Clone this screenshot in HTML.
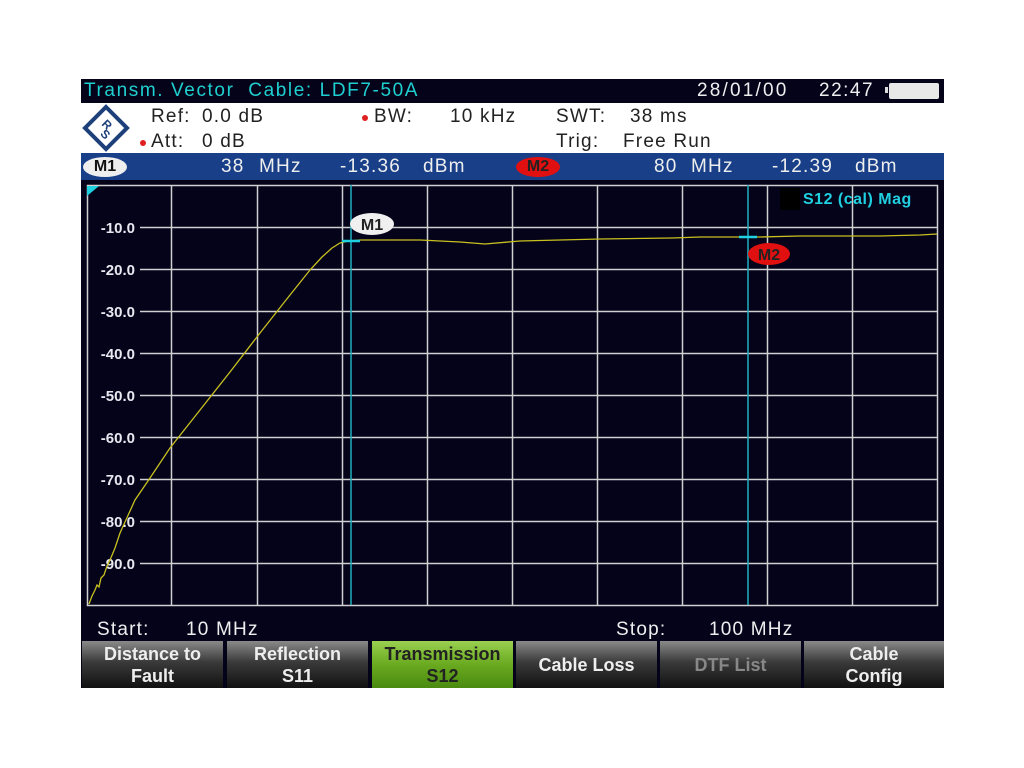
<!DOCTYPE html>
<html><head><style>
body{margin:0;width:1024px;height:768px;background:#fff;position:relative;overflow:hidden;font-family:"Liberation Sans",sans-serif}
.a{position:absolute}
.t{font-size:19px;white-space:nowrap;letter-spacing:1.2px}
.btn{position:absolute;top:641px;height:47px;width:141px;background:linear-gradient(#8a8a8a,#3a3a3a 45%,#111);color:#eee;font-weight:bold;font-size:18px;text-align:center;line-height:22px;display:flex;align-items:center;justify-content:center;font-family:"Liberation Sans Narrow","Liberation Sans",sans-serif}
</style></head><body>
<div class="a" style="left:81px;top:79px;width:863px;height:609px;background:#04031a"></div>
<div class="a t" style="left:84px;top:80px;color:#1fd0d0;letter-spacing:1.6px">Transm. Vector&nbsp; Cable: LDF7-50A</div>
<div class="a t" style="left:697px;top:80px;color:#eee;letter-spacing:2.2px">28/01/00</div>
<div class="a t" style="left:819px;top:80px;color:#eee;letter-spacing:1.5px">22:47</div>
<div class="a" style="left:885px;top:87px;width:3px;height:6px;background:#ddd"></div>
<div class="a" style="left:889px;top:83px;width:50px;height:16px;background:#e8e8e8;border-radius:2px"></div>
<div class="a" style="left:81px;top:103px;width:863px;height:50px;background:#fff"></div>
<svg class="a" style="left:82px;top:104px" width="48" height="48" viewBox="0 0 48 48"><polygon points="24,3 45,24 24,45 3,24" fill="none" stroke="#1d3f7a" stroke-width="4"/><text x="18" y="25" font-size="12" font-weight="bold" fill="#1d3f7a" transform="rotate(45 24 24)">R</text><text x="24" y="33" font-size="12" font-weight="bold" fill="#1d3f7a" transform="rotate(45 24 24)">S</text></svg>
<div class="a t" style="left:151px;top:106px;color:#222">Ref:</div><div class="a t" style="left:202px;top:106px;color:#222">0.0 dB</div>
<div class="a t" style="left:151px;top:131px;color:#222">Att:</div><div class="a t" style="left:202px;top:131px;color:#222">0 dB</div>
<div class="a" style="left:140px;top:140px;width:6px;height:6px;border-radius:3px;background:#e02020"></div>
<div class="a" style="left:362px;top:115px;width:6px;height:6px;border-radius:3px;background:#e02020"></div>
<div class="a t" style="left:374px;top:106px;color:#222">BW:</div><div class="a t" style="left:450px;top:106px;color:#222">10 kHz</div>
<div class="a t" style="left:556px;top:106px;color:#222">SWT:</div><div class="a t" style="left:630px;top:106px;color:#222">38 ms</div>
<div class="a t" style="left:556px;top:131px;color:#222">Trig:</div><div class="a t" style="left:623px;top:131px;color:#222">Free Run</div>
<div class="a" style="left:81px;top:153px;width:863px;height:27px;background:#183f88"></div>
<div class="a" style="left:83px;top:157px;width:44px;height:20px;border-radius:50%;background:#eee;color:#111;font-weight:bold;font-size:16px;text-align:center;line-height:20px">M1</div>
<div class="a t" style="left:221px;top:156px;color:#eee">38</div><div class="a t" style="left:259px;top:156px;color:#eee">MHz</div><div class="a t" style="left:340px;top:156px;color:#eee">-13.36</div><div class="a t" style="left:423px;top:156px;color:#eee">dBm</div>
<div class="a" style="left:516px;top:157px;width:44px;height:20px;border-radius:50%;background:#e01010;color:#222;font-weight:bold;font-size:16px;text-align:center;line-height:20px">M2</div>
<div class="a t" style="left:654px;top:156px;color:#eee">80</div><div class="a t" style="left:691px;top:156px;color:#eee">MHz</div><div class="a t" style="left:772px;top:156px;color:#eee">-12.39</div><div class="a t" style="left:855px;top:156px;color:#eee">dBm</div>
<svg class="a" style="left:0;top:0" width="1024" height="768">
<g stroke="#d0d0d0" stroke-width="1.5" fill="none">
<rect x="87.5" y="185.5" width="850" height="420"/>
<path d="M171.5 185V605M257.5 185V605M342.5 185V605M427.5 185V605M512.5 185V605M597.5 185V605M682.5 185V605M767.5 185V605M852.5 185V605"/>
<path d="M140 227.5H937M140 269.5H937M140 311.5H937M140 353.5H937M140 395.5H937M140 437.5H937M140 479.5H937M140 521.5H937M140 563.5H937"/>
</g>
<polygon points="87,186 99,186 87,196" fill="#1fd0e0"/>
<g font-family="Liberation Sans" font-weight="bold" font-size="15" fill="#e8e8f0" text-anchor="end">
<text x="135" y="233">-10.0</text><text x="135" y="275">-20.0</text><text x="135" y="317">-30.0</text><text x="135" y="359">-40.0</text><text x="135" y="401">-50.0</text><text x="135" y="443">-60.0</text><text x="135" y="485">-70.0</text><text x="135" y="527">-80.0</text><text x="135" y="569">-90.0</text>
</g>
<rect x="780" y="188" width="20" height="22" fill="#000"/>
<text x="803" y="204" font-family="Liberation Sans" font-weight="bold" font-size="16" fill="#1fd0e0" letter-spacing="0.5">S12 (cal) Mag</text>
<line x1="351" y1="185" x2="351" y2="605" stroke="#1fb0c0" stroke-width="1.5"/>
<line x1="748" y1="185" x2="748" y2="605" stroke="#1fb0c0" stroke-width="1.5"/>
<polyline fill="none" stroke="#c8c020" stroke-width="1.3" points="89,604 92,596 95,590 97,585 99,587 101,578 104,575 107,566 110,560 115,548 120,533 125,522 135,500 150,478 170,448 200,410 230,372 260,333 290,295 310,270 322,257 332,248 340,243 348,241 360,240 420,240 460,242 485,244 520,241 560,240 600,239 672,238 700,237 740,237 760,237 800,236 840,236 880,236 920,235 937,234"/>
<line x1="342" y1="241" x2="360" y2="241" stroke="#1fd0e0" stroke-width="2.5"/>
<line x1="739" y1="237" x2="757" y2="237" stroke="#1fd0e0" stroke-width="2.5"/>
<ellipse cx="372" cy="224" rx="22" ry="11" fill="#f0f0f0"/>
<text x="372" y="230" text-anchor="middle" font-family="Liberation Sans" font-weight="bold" font-size="16" fill="#222">M1</text>
<ellipse cx="769" cy="254" rx="21" ry="11" fill="#e01010"/>
<text x="769" y="260" text-anchor="middle" font-family="Liberation Sans" font-weight="bold" font-size="16" fill="#222">M2</text>
</svg>
<div class="a t" style="left:97px;top:619px;color:#eee">Start:</div><div class="a t" style="left:186px;top:619px;color:#eee">10 MHz</div>
<div class="a t" style="left:616px;top:619px;color:#eee">Stop:</div><div class="a t" style="left:709px;top:619px;color:#eee">100 MHz</div>
<div class="btn" style="left:82px">Distance to<br>Fault</div>
<div class="btn" style="left:227px">Reflection<br>S11</div>
<div class="btn" style="left:372px;background:linear-gradient(#9ad050,#6aaa20 50%,#4a8a10);color:#222">Transmission<br>S12</div>
<div class="btn" style="left:516px">Cable Loss</div>
<div class="btn" style="left:660px;color:#888">DTF List</div>
<div class="btn" style="left:804px;width:140px">Cable<br>Config</div>
</body></html>
